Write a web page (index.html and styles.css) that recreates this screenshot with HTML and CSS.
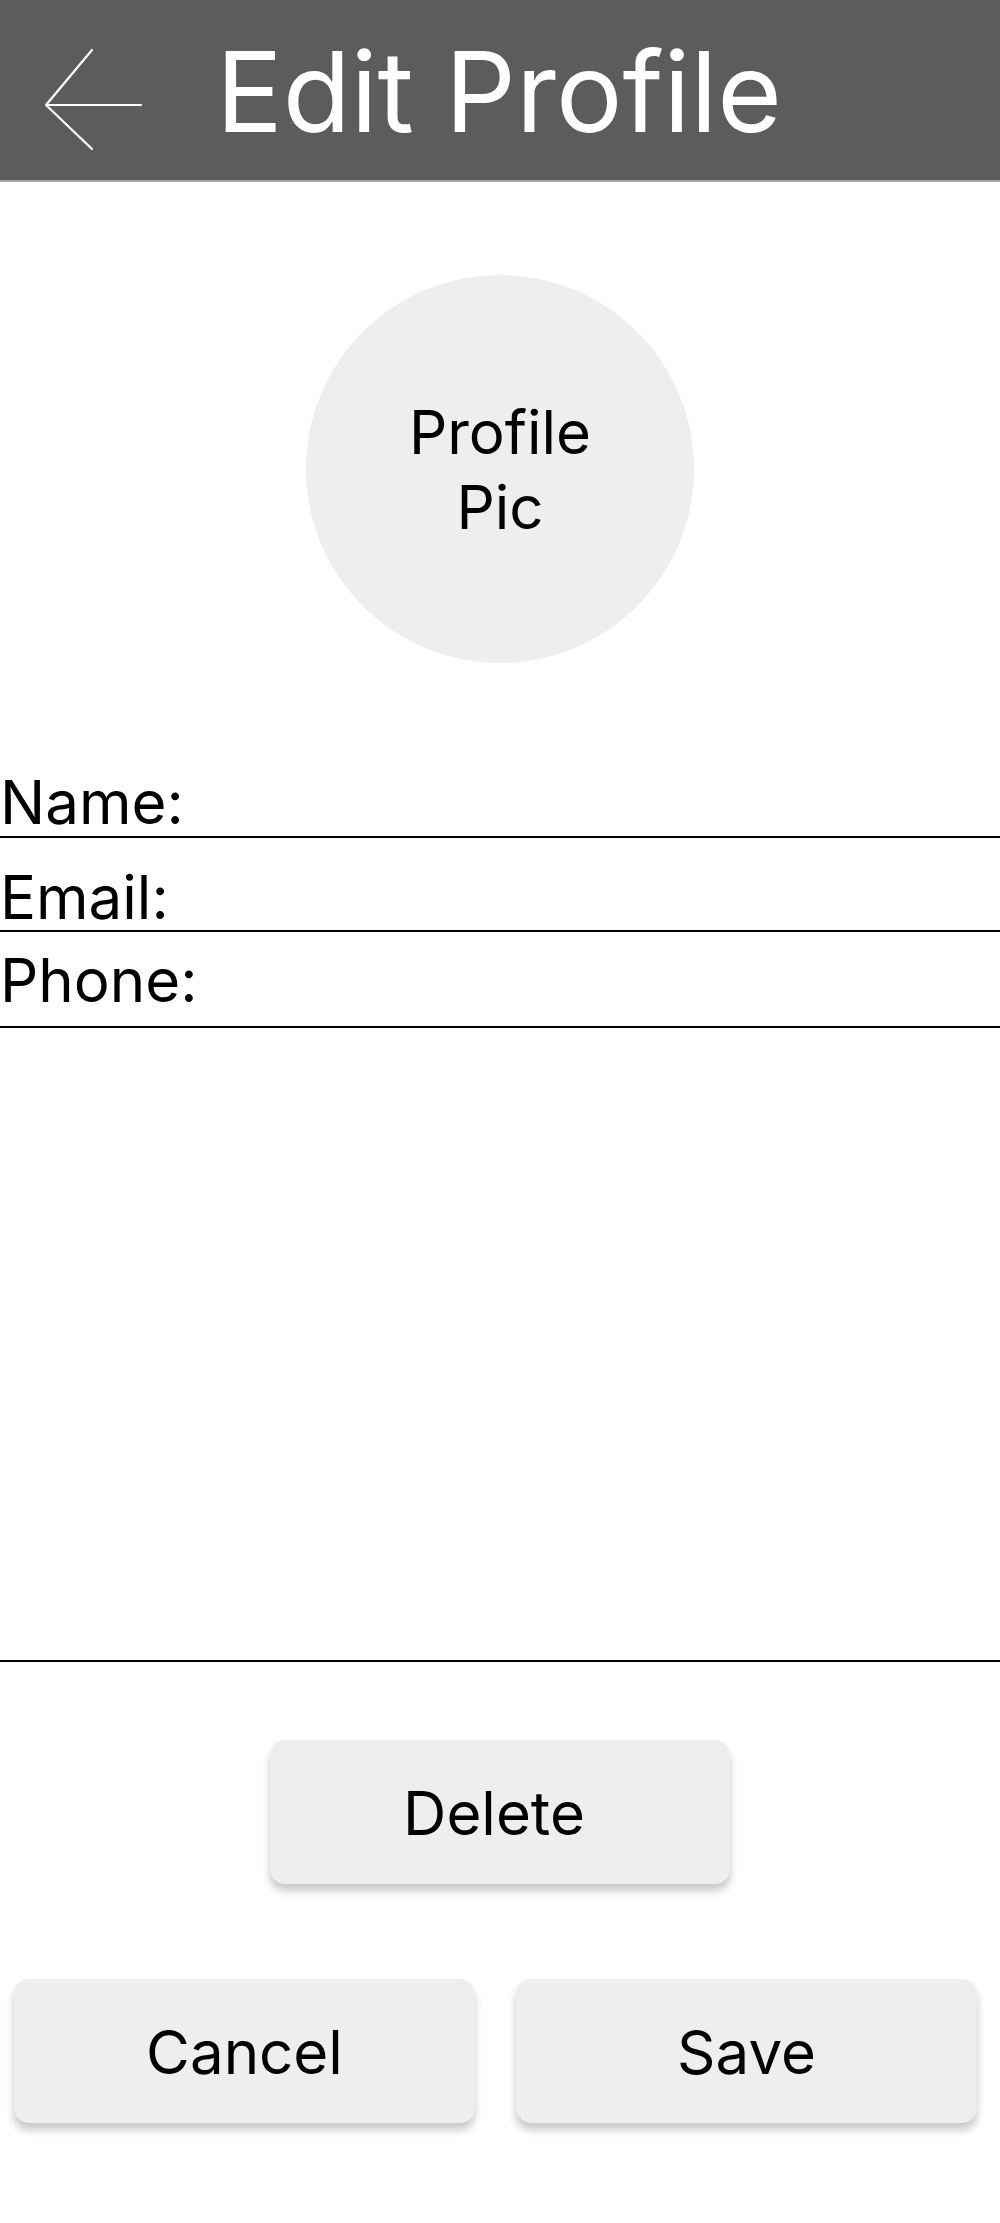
FILE: index.html
```html
<!DOCTYPE html>
<html lang="en">
<head>
<meta charset="utf-8">
<title>Edit Profile</title>
<link rel="stylesheet" href="styles.css">
</head>
<body>
<header class="topbar">
  <svg class="back" width="100" height="104" viewBox="0 0 100 104" aria-hidden="true">
    <path d="M48 3 L2 58 L48 102 M2 58 L97 58" fill="none" stroke="#fff" stroke-width="2.2" stroke-linecap="round" stroke-linejoin="round"/>
  </svg>
  <h1 class="title">Edit Profile</h1>
</header>
<main class="content">
  <div class="avatar"><span>Profile<br>Pic</span></div>
  <div class="fields">
    <div class="field field-name">Name:</div>
    <div class="field field-email">Email:</div>
    <div class="field field-phone">Phone:</div>
    <div class="field field-bio"></div>
  </div>
  <div class="delete-row">
    <button class="btn btn-delete">Delete</button>
  </div>
  <div class="action-row">
    <button class="btn">Cancel</button>
    <button class="btn">Save</button>
  </div>
</main>
</body>
</html>
```
FILE: styles.css
```css
html, body {
  margin: 0;
  padding: 0;
  background: #fff;
}
body {
  font-family: Inter, "Noto Sans", "Liberation Sans", sans-serif;
  color: #000;
  width: 1000px;
  height: 2223px;
  overflow: hidden;
}
.topbar {
  height: 180px;
  background: #5c5c5c;
  border-bottom: 2px solid #a3a3a3;
  display: flex;
  align-items: flex-start;
  box-sizing: content-box;
}
.back {
  margin-left: 44px;
  margin-top: 47px;
  flex: none;
}
.title {
  margin: 0 0 0 72px;
  font-weight: 400;
  font-size: 111px;
  line-height: 1;
  color: #fff;
  padding-top: 36px;
}
.content {
  display: flex;
  flex-direction: column;
}
.avatar {
  width: 388px;
  height: 388px;
  border-radius: 50%;
  background: #eeeeee;
  margin: 93px auto 0;
  display: flex;
  align-items: center;
  justify-content: center;
  text-align: center;
  font-size: 60px;
  line-height: 75px;
}
.avatar span {
  margin-top: 2px;
}
.fields {
  display: flex;
  flex-direction: column;
}
.field {
  font-size: 60px;
  line-height: 60px;
  border-bottom: 2px solid #000;
  display: flex;
  align-items: flex-end;
  box-sizing: border-box;
}
.field-name {
  margin-top: 103px;
  height: 72px;
  padding-bottom: 4px;
}
.field-email {
  height: 94px;
  padding-bottom: 3px;
}
.field-phone {
  height: 96px;
  padding-bottom: 16px;
}
.field-bio {
  height: 634px;
}
.delete-row {
  display: flex;
  justify-content: center;
  padding-top: 78px;
}
.btn {
  font-family: Inter, "Noto Sans", "Liberation Sans", sans-serif;
  font-size: 60px;
  color: #000;
  background: #eeeeee;
  border: none;
  border-radius: 15px;
  height: 144px;
  width: 461px;
  box-shadow: 0 7px 8px rgba(0, 0, 0, 0.22);
  padding: 0;
  padding-top: 2px;
}
.btn-delete {
  width: 460px;
  padding-right: 12px;
}
.action-row {
  display: flex;
  justify-content: space-between;
  padding: 95px 23px 0 14px;
}
```
